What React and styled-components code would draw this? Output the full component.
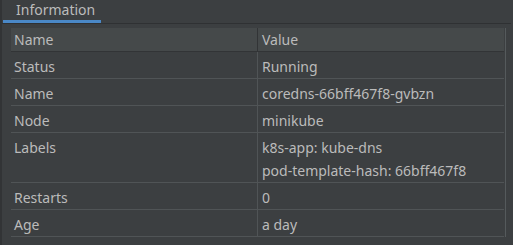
import React from 'react';
import styled, { createGlobalStyle } from 'styled-components';

const GlobalStyle = createGlobalStyle`
  html, body {
    margin: 0;
    padding: 0;
    background: #3c3f41;
  }
  body {
    font-family: "Noto Sans", "Open Sans", sans-serif;
    font-size: 14px;
    color: #bbbbbb;
  }
`;

const rows = [
  { name: 'Status', value: ['Running'] },
  { name: 'Name', value: ['coredns-66bff467f8-gvbzn'] },
  { name: 'Node', value: ['minikube'] },
  { name: 'Labels', value: ['k8s-app: kube-dns', 'pod-template-hash: 66bff467f8'] },
  { name: 'Restarts', value: ['0'] },
  { name: 'Age', value: ['a day'] },
];

const Panel = styled.div`
  width: 513px;
  height: 245px;
  background: #3c3f41;
  border-left: 2px solid #323436;
  box-sizing: border-box;
  overflow: hidden;
`;

const TabBar = styled.div`
  display: flex;
  height: 23px;
  margin-right: 2px;
  border-bottom: 1px solid #2f3133;
`;

const Tab = styled.div`
  width: 98px;
  margin-left: 1px;
  padding-left: 13px;
  box-sizing: border-box;
  line-height: 19px;
  border-bottom: 3px solid ${(p) => (p.active ? '#4a88c7' : 'transparent')};
`;

const Body = styled.div`
  padding: 4px 9px 0 9px;
`;

const Table = styled.div`
  display: grid;
  grid-template-columns: 246px 247px;
  border-right: 1px solid #555a5c;
  width: 494px;
`;

const HeadCell = styled.div`
  background: #45494a;
  height: 24px;
  line-height: 24px;
  padding-left: ${(p) => (p.first ? '3px' : '4px')};
  border-left: ${(p) => (p.first ? 'none' : '1px solid #323436')};
  border-bottom: 1px solid #323436;
  box-sizing: border-box;
`;

const Cell = styled.div`
  padding: 3px 0 0 ${(p) => (p.first ? '3px' : '4px')};
  min-height: 27px;
  line-height: 23px;
  box-sizing: border-box;
  border-bottom: 1px solid #505456;
  border-left: ${(p) => (p.first ? 'none' : '1px solid #505456')};
`;

export default function App() {
  return (
    <Panel>
      <GlobalStyle />
      <TabBar>
        <Tab active>Information</Tab>
      </TabBar>
      <Body>
        <Table>
          <HeadCell first>Name</HeadCell>
          <HeadCell>Value</HeadCell>
          {rows.map((r) => (
            <React.Fragment key={r.name}>
              <Cell first>{r.name}</Cell>
              <Cell>
                {r.value.map((v) => (
                  <div key={v}>{v}</div>
                ))}
              </Cell>
            </React.Fragment>
          ))}
        </Table>
      </Body>
    </Panel>
  );
}
